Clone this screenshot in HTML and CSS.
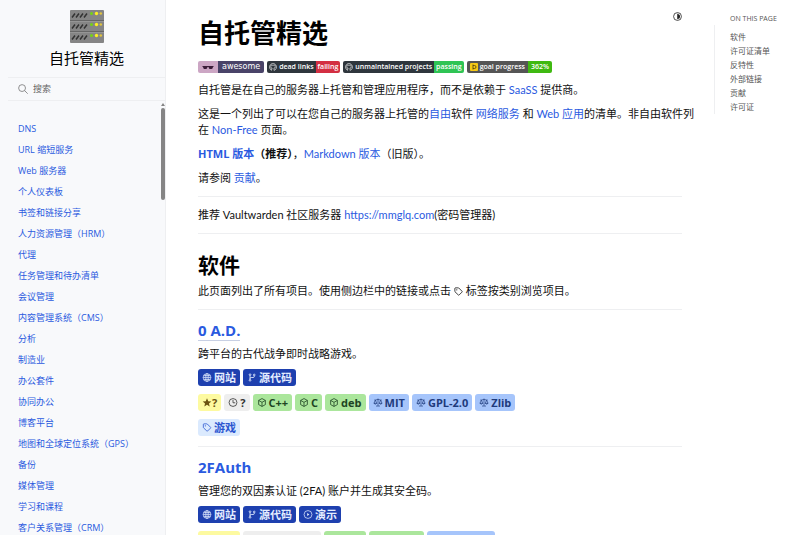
FILE: index.html
```html
<!DOCTYPE html>
<html lang="zh-CN">
<head>
    <meta charset="UTF-8">
    <meta name="viewport" content="width=device-width, initial-scale=1.0">
    <title>自托管精选</title>
    <link rel="stylesheet" href="styles.css">
</head>
<body>
    <svg class="sprite" aria-hidden="true">
        <symbol id="globe" viewBox="0 0 16 16"><g fill="none" stroke="currentColor" stroke-width="1.2"><circle cx="8" cy="8" r="7"/><ellipse cx="8" cy="8" rx="3.3" ry="7"/><path d="M8 1v14M1 8h14M2 4.5h12M2 11.500h12"/></g></symbol>
        <symbol id="branch" viewBox="0 0 16 16"><g fill="none" stroke="currentColor" stroke-width="1.5"><circle cx="4.500" cy="3" r="1.500"/><circle cx="4.500" cy="13" r="1.500"/><circle cx="12" cy="3.500" r="1.500"/><path d="M4.500 4.500v7M12 5v1q0 2-2 2H6.500q-2 0-2 2"/></g></symbol>
        <symbol id="play" viewBox="0 0 16 16"><circle cx="8" cy="8" r="7" fill="none" stroke="currentColor" stroke-width="1.300"/><path d="M6.500 5.500v5L10.500 8z" fill="currentColor"/></symbol>
        <symbol id="star" viewBox="0 0 16 16"><path d="M8 .5l2.200 5.100 5.500.5-4.200 3.600 1.300 5.400L8 12.200l-4.800 2.900 1.300-5.400L.3 6.100l5.500-.5z" fill="currentColor"/></symbol>
        <symbol id="clock" viewBox="0 0 16 16"><g fill="none" stroke="currentColor" stroke-width="1.400"><circle cx="8" cy="8" r="7"/><path d="M8 3.500V8.500h4"/></g></symbol>
        <symbol id="cube" viewBox="0 0 16 16"><path d="M8 1l6 3.300v7.400L8 15l-6-3.300V4.300zM2 4.300l6 3.400 6-3.400M8 7.700V15" fill="none" stroke="currentColor" stroke-width="1.400" stroke-linejoin="round"/></symbol>
        <symbol id="law" viewBox="0 0 16 16"><path d="M8 1v13M4.500 14.300h7M1.500 3.500h2.500L8 2.500l4 1h2.500M3.300 3.700L.8 9.500h5zM12.700 3.700l-2.500 5.800h5zM.8 9.500q2.500 3 5 0M10.200 9.500q2.500 3 5 0" fill="none" stroke="currentColor" stroke-width="1.200" stroke-linejoin="round"/></symbol>
        <symbol id="tag" viewBox="0 0 16 16"><path d="M1.500 2.500q0-1 1-1h5.200q.5 0 .8.300l5.700 5.700q.8.800 0 1.600l-5 5q-.8.800-1.600 0L1.800 8.500q-.3-.3-.3-.8z" fill="none" stroke="currentColor" stroke-width="1.400"/><circle cx="5" cy="5" r="1" fill="currentColor"/></symbol>
        <symbol id="github" viewBox="0 0 16 16"><path d="M6 14.800A7 7 0 1 1 10 14.800V12.500q0-1-.5-1.500 3-.3 3-3.300 0-1.200-.7-2 .3-1-.1-1.900-.9 0-2 .8-1.700-.5-3.400 0-1.100-.8-2-.8-.4.900-.1 1.900-.7.800-.7 2 0 3 3 3.300-.5.500-.5 1.500-1.500.5-2.500-1" fill="none" stroke="currentColor" stroke-width="1.200"/></symbol>
    </svg>

    <div class="layout">
        <aside class="sidebar">
            <a class="brand" href="#top">
                <svg class="brand-logo" viewBox="0 0 34 33" aria-hidden="true">
                    <rect width="34" height="33" rx="1" fill="#858585"/>
                    <path d="M0 10.500h34M0 21.500h34" stroke="#666"/>
                    <path d="M0 11.500h34M0 22.500h34" stroke="#a0a0a0" stroke-width=".6"/>
                    <path d="M2 7.500l3-4M6 7.500l3-4M10 7.500l3-4M14 7.500l3-4M2 18.500l3-4M6 18.500l3-4M10 18.500l3-4M14 18.500l3-4M2 29.500l3-4M6 29.500l3-4M10 29.500l3-4M14 29.500l3-4" stroke="#333" stroke-width="1.500"/>
                    <g fill="#73d216"><circle cx="21.500" cy="3.500" r="1.500"/><circle cx="21.500" cy="14.500" r="1.500"/><circle cx="21.500" cy="25.500" r="1.500"/></g>
                    <g fill="#fcee21"><circle cx="26.500" cy="3.500" r="1.700"/><circle cx="26.500" cy="14.500" r="1.700"/><circle cx="26.500" cy="25.500" r="1.700"/></g>
                    <g fill="#e0c340"><circle cx="30.800" cy="3.500" r="1.300"/><circle cx="30.800" cy="14.500" r="1.300"/><circle cx="30.800" cy="25.500" r="1.300"/></g>
                </svg>
                <span class="brand-text">自托管精选</span>
            </a>
            <form class="search" role="search">
                <svg class="search-icon" viewBox="0 0 16 16" aria-hidden="true"><circle cx="6.500" cy="6.500" r="5.500" fill="none" stroke="currentColor" stroke-width="1.300"/><path d="M10.500 10.500l5 5" stroke="currentColor" stroke-width="1.300"/></svg>
                <input class="search-input" type="search" placeholder="搜索" aria-label="搜索">
            </form>
            <nav class="nav">
                <a href="#">DNS</a>
                <a href="#">URL 缩短服务</a>
                <a href="#">Web 服务器</a>
                <a href="#">个人仪表板</a>
                <a href="#">书签和链接分享</a>
                <a href="#">人力资源管理（HRM）</a>
                <a href="#">代理</a>
                <a href="#">任务管理和待办清单</a>
                <a href="#">会议管理</a>
                <a href="#">内容管理系统（CMS）</a>
                <a href="#">分析</a>
                <a href="#">制造业</a>
                <a href="#">办公套件</a>
                <a href="#">协同办公</a>
                <a href="#">博客平台</a>
                <a href="#">地图和全球定位系统（GPS）</a>
                <a href="#">备份</a>
                <a href="#">媒体管理</a>
                <a href="#">学习和课程</a>
                <a href="#">客户关系管理（CRM）</a>
            </nav>
            <div class="scrollbar" aria-hidden="true"></div>
        </aside>

        <main class="content" id="top">
            <div class="title-row">
                <h1>自托管精选</h1>
                <button class="theme-toggle" type="button" aria-label="切换主题">
                    <svg viewBox="0 0 16 16" aria-hidden="true"><circle cx="8" cy="8" r="7" fill="none" stroke="currentColor" stroke-width="1.400"/><path d="M8 3.500a4.500 4.500 0 0 1 0 9z" fill="currentColor"/><path d="M8 3v10" stroke="currentColor"/></svg>
                </button>
            </div>

            <div class="badges">
                <a class="badge" href="#">
                    <span class="badge-logo"><svg viewBox="0 0 24 10" aria-hidden="true"><path d="M1 3h22v2h-1l-1 3q-4 2-7 0l-1-3h-2l-1 3q-4 2-7 0L2 5H1z" fill="#3a1c38"/></svg></span><span class="badge-awesome">awesome</span>
                </a>
                <a class="badge" href="#">
                    <span class="badge-dark"><svg class="badge-icon"><use href="#github"/></svg>dead links</span><span class="badge-fail">failing</span>
                </a>
                <a class="badge" href="#">
                    <span class="badge-dark"><svg class="badge-icon"><use href="#github"/></svg>unmaintained projects</span><span class="badge-pass">passing</span>
                </a>
                <a class="badge" href="#">
                    <span class="badge-grey"><svg class="badge-icon" viewBox="0 0 16 16" aria-hidden="true"><rect width="16" height="16" rx="2" fill="#f6c915"/><path d="M6 3v10M6 5h3q3 0 3 3t-3 3H6" fill="none" stroke="#5a4a10" stroke-width="1.800"/></svg>goal progress</span><span class="badge-goal">362%</span>
                </a>
            </div>

            <p>自托管是在自己的服务器上托管和管理应用程序，而不是依赖于 <a href="#">SaaSS</a> 提供商。</p>
            <p class="intro">这是一个列出了可以在您自己的服务器上托管的<a href="#">自由</a>软件 <a href="#">网络服务</a> 和 <a href="#">Web 应用</a>的清单。非自由软件列<br>在 <a href="#">Non-Free</a> 页面。</p>
            <p><strong><a href="#">HTML 版本</a>（推荐）</strong>，<a href="#">Markdown 版本</a>（旧版）。</p>
            <p>请参阅 <a href="#">贡献</a>。</p>
            <hr>
            <p>推荐 Vaultwarden 社区服务器 <a href="#">https://mmglq.com</a>(密码管理器)</p>
            <hr>

            <h2>软件</h2>
            <p>此页面列出了所有项目。使用侧边栏中的链接或点击 <svg class="icon"><use href="#tag"/></svg> 标签按类别浏览项目。</p>
            <hr>

            <section class="project">
                <h3><a class="underlined" href="#">0 A.D.</a></h3>
                <p>跨平台的古代战争即时战略游戏。</p>
                <div class="labels">
                    <a class="label link" href="#"><svg class="icon"><use href="#globe"/></svg>网站</a>
                    <a class="label link" href="#"><svg class="icon"><use href="#branch"/></svg>源代码</a>
                </div>
                <div class="labels">
                    <span class="label stars"><svg class="icon"><use href="#star"/></svg>?</span>
                    <span class="label updated"><svg class="icon"><use href="#clock"/></svg>?</span>
                    <span class="label platform"><svg class="icon"><use href="#cube"/></svg>C++</span>
                    <span class="label platform"><svg class="icon"><use href="#cube"/></svg>C</span>
                    <span class="label platform"><svg class="icon"><use href="#cube"/></svg>deb</span>
                    <span class="label license"><svg class="icon"><use href="#law"/></svg>MIT</span>
                    <span class="label license"><svg class="icon"><use href="#law"/></svg>GPL-2.0</span>
                    <span class="label license"><svg class="icon"><use href="#law"/></svg>Zlib</span>
                </div>
                <div class="labels">
                    <a class="label tag" href="#"><svg class="icon"><use href="#tag"/></svg>游戏</a>
                </div>
            </section>
            <hr>

            <section class="project">
                <h3><a href="#">2FAuth</a></h3>
                <p>管理您的双因素认证 (2FA) 账户并生成其安全码。</p>
                <div class="labels">
                    <a class="label link" href="#"><svg class="icon"><use href="#globe"/></svg>网站</a>
                    <a class="label link" href="#"><svg class="icon"><use href="#branch"/></svg>源代码</a>
                    <a class="label link" href="#"><svg class="icon"><use href="#play"/></svg>演示</a>
                </div>
                <div class="labels">
                    <span class="label stars label-short"></span>
                    <span class="label updated label-date"></span>
                    <span class="label platform label-short"></span>
                    <span class="label platform label-medium"></span>
                    <span class="label license label-long"></span>
                </div>
            </section>
        </main>

        <aside class="toc">
            <div class="toc-title">ON THIS PAGE</div>
            <nav class="toc-list">
                <a href="#">软件</a>
                <a href="#">许可证清单</a>
                <a href="#">反特性</a>
                <a href="#">外部链接</a>
                <a href="#">贡献</a>
                <a href="#">许可证</a>
            </nav>
        </aside>
    </div>
</body>
</html>
```

FILE: styles.css
```css
* {
    margin: 0;
    padding: 0;
    box-sizing: border-box;
}

body {
    font-family: "Open Sans", "Noto Sans CJK SC", sans-serif;
    font-size: 11px;
    line-height: 16px;
    color: #111;
    background: #fff;
}

a {
    color: #2a5adf;
    text-decoration: none;
}

a:hover {
    text-decoration: underline;
}

.sprite {
    position: absolute;
    width: 0;
    height: 0;
}

.layout {
    display: flex;
    height: 100vh;
    overflow: hidden;
}

/* Sidebar */
.sidebar {
    position: relative;
    display: flex;
    flex-direction: column;
    flex: 0 0 166px;
    padding: 10px 0 0 8px;
    background: #f8f9fb;
    border-right: 1px solid #eeeff1;
    overflow: hidden;
}

.brand {
    display: flex;
    flex-direction: column;
    align-items: center;
    gap: 4px;
    color: #000;
}

.brand-logo {
    width: 34px;
    height: 33px;
}

.brand-text {
    font-size: 15px;
    line-height: 22px;
}

.search {
    display: flex;
    align-items: center;
    gap: 5px;
    height: 24px;
    margin-top: 8px;
    padding-left: 10px;
    border-top: 1px solid #eeeff1;
    border-bottom: 1px solid #eeeff1;
    color: #777;
}

.search-icon {
    flex: none;
    width: 10px;
    height: 10px;
}

.search-input {
    flex: 1;
    min-width: 0;
    border: none;
    outline: none;
    background: transparent;
    font: inherit;
    font-size: 9px;
}

.search-input::placeholder {
    color: #666;
}

.nav {
    display: flex;
    flex-direction: column;
    padding: 17px 0 0 10px;
    overflow: hidden;
}

.nav a {
    flex: none;
    font-size: 9px;
    line-height: 21px;
    white-space: nowrap;
}

.scrollbar {
    position: absolute;
    top: 108px;
    right: 0;
    width: 4px;
    height: 92px;
    border-radius: 2px;
    background: #858585;
}

.scrollbar::before {
    content: "";
    position: absolute;
    top: -5px;
    left: 0;
    border: 2px solid transparent;
    border-top: none;
    border-bottom: 3px solid #858585;
}

/* Content */
.content {
    flex: 1;
    min-width: 0;
    padding: 12px 32px 0;
    overflow: auto;
    scrollbar-width: none;
}

.title-row {
    display: flex;
    justify-content: space-between;
    align-items: flex-start;
}

h1 {
    font-size: 26px;
    line-height: 42px;
    color: #000;
}

h2 {
    margin: 16px 0 3px;
    font-size: 21px;
    line-height: 30px;
    color: #000;
}

h3 {
    margin: 11px 0 7px;
    font-size: 15px;
    line-height: 18px;
}

.underlined {
    border-bottom: 1px solid #c8d0e4;
}

.theme-toggle {
    display: flex;
    border: none;
    background: none;
    color: #222;
    cursor: pointer;
}

.theme-toggle svg {
    width: 9px;
    height: 9px;
}

.content p {
    margin-bottom: 8px;
    font-family: Lato, "Noto Sans CJK SC", sans-serif;
}

.content strong {
    font-family: "Open Sans", "Noto Sans CJK SC", sans-serif;
}

.intro {
    white-space: nowrap;
}

hr {
    margin: 10px 0;
    border: none;
    border-top: 1px solid #eeeff1;
}

/* Badges */
.badges {
    display: flex;
    gap: 3px;
    height: 12px;
    margin: 7px 0 9px;
}

.badge {
    display: flex;
    border-radius: 2px;
    overflow: hidden;
    color: #fff;
    font-size: 7px;
    font-weight: 600;
    line-height: 12px;
    white-space: nowrap;
}

.badge span {
    display: flex;
    align-items: center;
    gap: 2px;
    padding: 0 2px;
}

.badge .badge-logo {
    padding: 0 4px;
    background: #cca6c4;
}

.badge-logo svg {
    width: 12px;
    height: 6px;
}

.badge .badge-awesome {
    padding: 0 4px;
    background: #494368;
    font-family: "DejaVu Sans", sans-serif;
    font-size: 8px;
    font-weight: 400;
}

.badge-icon {
    width: 8px;
    height: 8px;
}

.badge-dark {
    background: #2f363d;
}

.badge .badge-grey {
    padding: 0 3px;
    background: #555;
}

.badge-fail {
    background: #d32f42;
}

.badge-pass {
    background: #2fc454;
}

.badge .badge-goal {
    padding: 0 3px;
    background: #3fb911;
}

/* Projects */
.content .project p {
    margin-bottom: 7px;
}

.labels {
    display: flex;
    gap: 3px;
    margin-bottom: 8px;
}

.label {
    display: flex;
    align-items: center;
    gap: 2px;
    height: 17px;
    padding: 0 4px;
    border-radius: 3px;
    font-weight: 700;
    white-space: nowrap;
}

.label-short {
    width: 42px;
}

.label-medium {
    width: 55px;
}

.label-long {
    width: 68px;
}

.label-date {
    width: 78px;
}

.icon {
    display: inline-block;
    flex: none;
    width: 9px;
    height: 9px;
    vertical-align: -1px;
}

.label .icon {
    width: 10px;
}

.link {
    background: #1e40af;
    color: #e4edff;
}

.stars {
    gap: 0;
    background: #fdfaa0;
    color: #6b5310;
}

.updated {
    background: #eee;
    color: #333;
}

.platform {
    background: #abe69c;
    color: #1d4423;
}

.license {
    background: #a6c5fb;
    color: #1e3a7c;
}

.tag {
    background: #dbeafe;
    color: #2a55d0;
}

/* Table of contents */
.toc {
    flex: 0 0 86px;
    padding-top: 12px;
    color: #555;
}

.toc-title {
    padding-left: 16px;
    font-size: 7px;
    line-height: 13px;
    white-space: nowrap;
}

.toc-list {
    display: flex;
    flex-direction: column;
    padding: 5px 0 0 15px;
    border-left: 1px solid #eeeff1;
}

.toc-list a {
    color: #555;
    font-size: 8px;
    line-height: 14px;
}
```
